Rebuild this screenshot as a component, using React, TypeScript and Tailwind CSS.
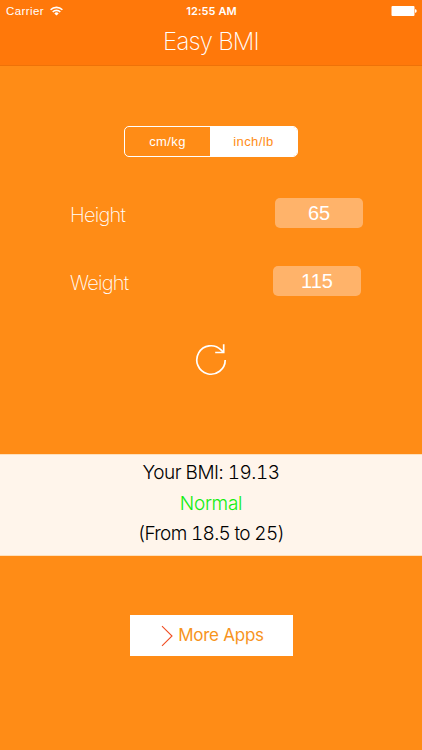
const units = [
  { id: 'metric', label: 'cm/kg', active: false },
  { id: 'imperial', label: 'inch/lb', active: true },
];

function StatusBar() {
  return (
    <div className="grid h-[22px] grid-cols-3 items-center pl-[6px] pr-[5px] text-[11.5px] leading-[22px] text-white">
      <div className="flex items-center gap-[6px]">
        <span className="tracking-[0.4px]">Carrier</span>
        <svg width="13" height="10" viewBox="0 0 13 10" fill="none" stroke="currentColor" strokeWidth="1.6">
          <path d="M0.6 3.8a8.3 8.3 0 0 1 11.8 0" />
          <path d="M2.7 6a5.3 5.3 0 0 1 7.6 0" />
          <path d="M6.5 9.6 4.3 7.4a3.1 3.1 0 0 1 4.4 0Z" fill="currentColor" stroke="none" />
        </svg>
      </div>
      <span className="text-center font-['Inter'] text-[11px] font-semibold tracking-[0.1px]">12:55 AM</span>
      <svg className="justify-self-end" width="26" height="10" viewBox="0 0 26 10" fill="currentColor">
        <rect x="0.5" y="0" width="23" height="10" rx="1" />
        <path d="M24 3.2h0.5a1.2 1.8 0 0 1 0 3.6H24Z" />
      </svg>
    </div>
  );
}

function Field({ label, value, className }: { label: string; value: string; className: string }) {
  return (
    <div className={`flex h-[30px] items-center justify-between pl-[70px] text-white ${className}`}>
      <span className="pt-[3px] font-['Inter'] text-[20px] font-extralight tracking-[-0.75px]">{label}</span>
      <div className="flex h-[30px] w-[88px] items-center justify-center rounded-[5px] bg-[#ffb36a] text-[20px]">
        {value}
      </div>
    </div>
  );
}

export default function App() {
  return (
    <div className="flex h-[750px] w-[422px] flex-col items-center overflow-hidden bg-[#ff8c16] font-['Liberation_Sans',sans-serif]">
      <header className="h-[66px] w-full border-b border-[#ee7208] bg-[#ff780a]">
        <StatusBar />
        <h1 className="text-center font-['Inter'] text-[24px] font-extralight leading-[39px] tracking-[-0.8px] text-white">
          Easy BMI
        </h1>
      </header>

      <div className="mt-[60px] flex h-[31px] w-[174px] overflow-hidden rounded-[5px] border border-white">
        {units.map((unit) => (
          <button
            key={unit.id}
            className={`text-[13px] tracking-[0.4px] ${unit.active ? 'flex-1 bg-white text-[#ff8c16]' : 'w-[85px] text-white'}`}
          >
            {unit.label}
          </button>
        ))}
      </div>

      <div className="mt-[41px] w-full">
        <Field label="Height" value="65" className="pr-[59px]" />
        <Field label="Weight" value="115" className="mt-[38px] pr-[61px]" />
      </div>

      <button className="mt-[47px] text-white" aria-label="Reset">
        <svg width="32" height="34" viewBox="0 0 32 34" fill="none" stroke="currentColor" strokeWidth="1.7">
          <path d="M30.2 17A14.2 14.2 0 1 1 26 6.9l2.2 2.3" />
          <path d="M28.7 1.2v8.3h-8.5" />
        </svg>
      </button>

      <section className="mt-[77px] flex h-[102px] w-full flex-col items-center border-y border-[#ffe0bb] bg-[#fff5eb] pt-[3px] font-['Inter'] text-[19px] font-light leading-[30.5px] tabular-nums text-black">
        <p className="tracking-[-0.5px]">Your BMI: 19.13</p>
        <p className="tracking-[-0.3px] text-[#12ee12]">Normal</p>
        <p className="tracking-[-0.7px]">(From 18.5 to 25)</p>
      </section>

      <button className="mt-[59px] flex h-[41px] w-[163px] items-center justify-center gap-[5px] bg-white pl-[3px] text-[#f7941d]">
        <svg width="12" height="22" viewBox="0 0 12 22" fill="none" stroke="#f04e23" strokeWidth="1.1">
          <path d="m1 1.2 10 9.8L1 20.8" />
        </svg>
        <span className="font-['Inter'] text-[17px] font-normal tracking-[-0.25px]">More Apps</span>
      </button>
    </div>
  );
}
